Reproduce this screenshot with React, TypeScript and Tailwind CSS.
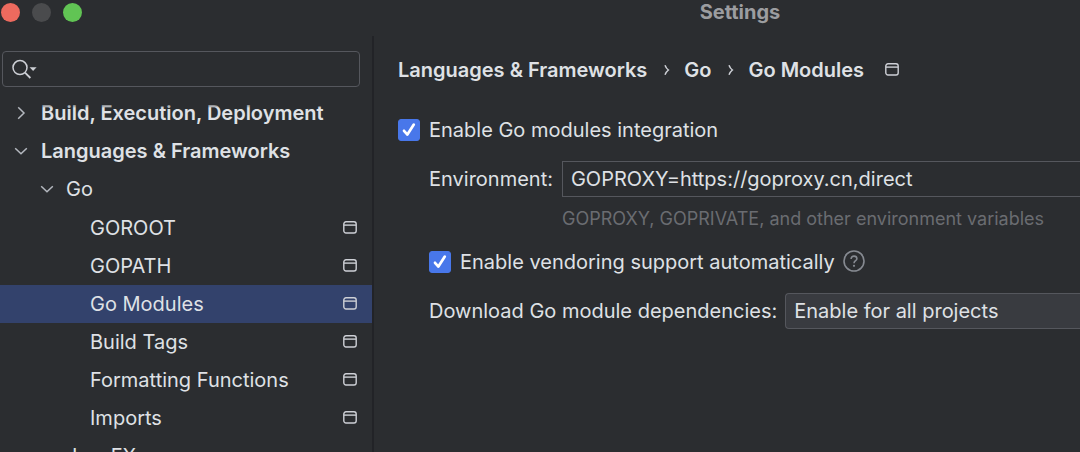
import { useState } from "react";
import type { ReactNode } from "react";

const leaves = ["GOROOT", "GOPATH", "Go Modules", "Build Tags", "Formatting Functions", "Imports"];

function ProjectIcon() {
  return (
    <svg width="14" height="14" viewBox="0 0 14 14" fill="none" stroke="#ced0d6" strokeWidth="1.4" className="shrink-0" aria-hidden="true">
      <rect x="0.8" y="0.8" width="12.4" height="11.2" rx="2.2" />
      <path d="M1 4.1H13" />
    </svg>
  );
}

function Chevron({ open }: { open: boolean }) {
  return (
    <svg width="14" height="14" viewBox="0 0 14 14" fill="none" stroke="#b4b8bf" strokeWidth="1.5" className="shrink-0" aria-hidden="true">
      {open ? <path d="M1.2 4.2L7 9.8L12.8 4.2" /> : <path d="M4.2 1.2L10 7L4.2 12.8" />}
    </svg>
  );
}

function CrumbArrow() {
  return (
    <svg width="6" height="12" viewBox="0 0 6 12" fill="none" stroke="#ced0d6" strokeWidth="1.5" className="shrink-0" aria-hidden="true">
      <path d="M1 1.2C1.8 3.4 2.8 4.8 4.4 6C2.8 7.2 1.8 8.6 1 10.8" />
    </svg>
  );
}

function Tick({ id, children }: { id: string; children: ReactNode }) {
  return (
    <div className="flex h-6 items-center gap-[9px]">
      <span className="grid shrink-0 place-items-center">
        <input
          id={id}
          type="checkbox"
          defaultChecked
          className="peer col-start-1 row-start-1 size-[22px] appearance-none rounded-[3px] border border-[#6f737a] checked:border-[#4877ea] checked:bg-[#4877ea]"
        />
        <svg viewBox="0 0 22 22" fill="none" stroke="#fff" strokeWidth="2.7" strokeLinecap="round" strokeLinejoin="round" className="pointer-events-none invisible col-start-1 row-start-1 size-[22px] peer-checked:visible" aria-hidden="true">
          <path d="M6 11.8L9.4 15.6L15.8 5.6" />
        </svg>
      </span>
      <label htmlFor={id}>{children}</label>
    </div>
  );
}

export default function App() {
  const [selected, setSelected] = useState("Go Modules");
  return (
    <div className="flex h-screen flex-col overflow-hidden bg-[#2b2d30] font-['Inter',sans-serif] text-[20px] leading-6 text-[#dfe1e5]">
      <header className="flex h-9 shrink-0">
        <div className="flex w-[400px] shrink-0 gap-3 px-px pt-[3px]">
          <button aria-label="Close" className="size-[19px] rounded-full bg-[#ed6a5e]" />
          <button aria-label="Minimize" className="size-[19px] rounded-full bg-[#4a4b4d]" />
          <button aria-label="Zoom" className="size-[19px] rounded-full bg-[#61c454]" />
        </div>
        <h1 className="flex-1 text-center font-bold text-[#9c9da0]">Settings</h1>
      </header>

      <div className="flex min-h-0 flex-1">
        <aside className="flex w-[374px] shrink-0 flex-col border-r-2 border-[#222327]">
          <div className="mt-[15px] mr-3 ml-0.5 flex h-9 shrink-0 items-center rounded border border-[#55575d] pl-[9px]">
            <svg width="26" height="20" viewBox="0 0 26 20" fill="none" stroke="#ced0d6" strokeWidth="1.5" className="shrink-0" aria-hidden="true">
              <circle cx="8" cy="8.6" r="7" />
              <path d="M13 13.6L18.4 19" strokeWidth="1.8" />
              <path d="M17.6 8.2H24.6L21.1 12Z" fill="#ced0d6" stroke="none" />
            </svg>
            <input aria-label="Search settings" className="min-w-0 flex-1 bg-transparent px-2 outline-none" />
          </div>

          <nav className="relative mt-[7px] min-h-0 flex-1 overflow-hidden" aria-label="Settings categories">
            <div className="pointer-events-none absolute inset-x-0 top-2 h-1.5 bg-linear-to-b from-[#2b2d30] to-transparent" />
            <ul>
              <li>
                <button className="flex h-[38px] w-full items-center gap-[13px] pl-3.5 font-semibold">
                  <Chevron open={false} />
                  Build, Execution, Deployment
                </button>
              </li>
              <li>
                <button className="flex h-[38px] w-full items-center gap-[13px] pl-3.5 font-semibold">
                  <Chevron open />
                  Languages &amp; Frameworks
                </button>
                <ul>
                  <li>
                    <button className="flex h-[38px] w-full items-center gap-3 pl-10">
                      <Chevron open />
                      Go
                    </button>
                    <ul className="pt-px">
                      {leaves.map((name) => (
                        <li key={name}>
                          <button
                            onClick={() => setSelected(name)}
                            className={
                              name === selected
                                ? "flex h-[38px] w-full items-center justify-between bg-[#33426c] pr-[15px] pl-[90px]"
                                : "flex h-[38px] w-full items-center justify-between pr-[15px] pl-[90px]"
                            }
                          >
                            {name}
                            <ProjectIcon />
                          </button>
                        </li>
                      ))}
                    </ul>
                  </li>
                  <li>
                    <button className="flex h-[38px] w-full items-center pl-[66px]">JavaFX</button>
                  </li>
                </ul>
              </li>
            </ul>
          </nav>
        </aside>

        <main className="flex min-w-0 flex-1 flex-col pt-[22px] pl-6 whitespace-nowrap">
          <nav className="flex items-center font-semibold" aria-label="Breadcrumb">
            <a href="#languages">Languages &amp; Frameworks</a>
            <span className="pr-3.5 pl-[17px]"><CrumbArrow /></span>
            <a href="#go">Go</a>
            <span className="pr-3.5 pl-[17px]"><CrumbArrow /></span>
            <a href="#go-modules" className="mr-[21px]">Go Modules</a>
            <ProjectIcon />
          </nav>

          <div className="mt-9">
            <Tick id="integration">Enable Go modules integration</Tick>
          </div>

          <div className="mt-[19px] flex flex-col pl-[31px]">
            <div className="flex h-9 items-center gap-[9px]">
              <label htmlFor="environment">Environment:</label>
              <input
                id="environment"
                defaultValue="GOPROXY=https://goproxy.cn,direct"
                aria-describedby="environment-hint"
                className="h-9 min-w-0 flex-1 border border-r-0 border-[#55575d] bg-transparent px-2 outline-none"
              />
            </div>
            <p id="environment-hint" className="mt-2.5 pl-[133px] text-[18px] text-[#6a6c71]">
              GOPROXY, GOPRIVATE, and other environment variables
            </p>

            <div className="mt-[19px] flex items-center gap-[7px]">
              <Tick id="vendoring">Enable vendoring support automatically</Tick>
              <button aria-label="Help">
                <svg width="24" height="24" viewBox="0 0 24 24" fill="none" stroke="#868a91" strokeWidth="1.6" aria-hidden="true">
                  <circle cx="12" cy="11" r="10" />
                  <path d="M9.1 8.9C9.1 7.2 10.3 6.1 12 6.1C13.7 6.1 14.9 7.2 14.9 8.7C14.9 10.7 12 10.8 12 13.2" />
                  <circle cx="12" cy="15.8" r="1.1" fill="#868a91" stroke="none" />
                </svg>
              </button>
            </div>

            <div className="mt-[19px] flex h-9 items-center gap-2">
              <label htmlFor="dependencies">Download Go module dependencies:</label>
              <select
                id="dependencies"
                className="h-9 min-w-0 flex-1 appearance-none rounded-l border border-r-0 border-[#55575d] bg-[#393b40] px-2 outline-none"
              >
                <option>Enable for all projects</option>
                <option>Disable for all projects</option>
              </select>
            </div>
          </div>
        </main>
      </div>
    </div>
  );
}
